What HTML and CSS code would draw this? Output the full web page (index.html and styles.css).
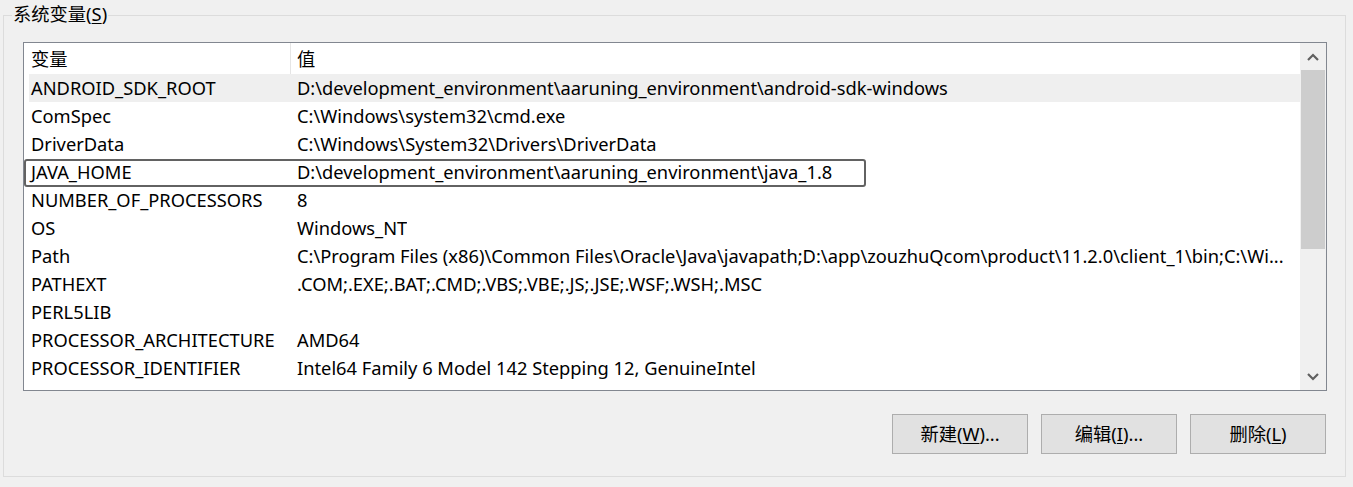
FILE: index.html
```html
<!DOCTYPE html>
<html>
<head>
<meta charset="utf-8">
<link rel="stylesheet" href="styles.css">
</head>
<body>
<div class="group">
  <div class="title">系统变量(<u>S</u>)</div>
  <div class="list">
    <div class="content">
      <div class="header">
        <div class="c1">变量</div>
        <div class="c2">值</div>
      </div>
      <div class="row sel"><div class="c1">ANDROID_SDK_ROOT</div><div class="c2">D:\development_environment\aaruning_environment\android-sdk-windows</div></div>
      <div class="row"><div class="c1">ComSpec</div><div class="c2">C:\Windows\system32\cmd.exe</div></div>
      <div class="row"><div class="c1">DriverData</div><div class="c2">C:\Windows\System32\Drivers\DriverData</div></div>
      <div class="row focus"><div class="c1">JAVA_HOME</div><div class="c2">D:\development_environment\aaruning_environment\java_1.8</div></div>
      <div class="row"><div class="c1">NUMBER_OF_PROCESSORS</div><div class="c2">8</div></div>
      <div class="row"><div class="c1">OS</div><div class="c2">Windows_NT</div></div>
      <div class="row"><div class="c1">Path</div><div class="c2">C:\Program Files (x86)\Common Files\Oracle\Java\javapath;D:\app\zouzhuQcom\product\11.2.0\client_1\bin;C:\Wi...</div></div>
      <div class="row"><div class="c1">PATHEXT</div><div class="c2">.COM;.EXE;.BAT;.CMD;.VBS;.VBE;.JS;.JSE;.WSF;.WSH;.MSC</div></div>
      <div class="row"><div class="c1">PERL5LIB</div><div class="c2"></div></div>
      <div class="row"><div class="c1">PROCESSOR_ARCHITECTURE</div><div class="c2">AMD64</div></div>
      <div class="row"><div class="c1">PROCESSOR_IDENTIFIER</div><div class="c2">Intel64 Family 6 Model 142 Stepping 12, GenuineIntel</div></div>
    </div>
    <div class="scrollbar">
      <div class="arrow">
        <svg width="12" height="8" viewBox="0 0 12 8"><path d="M1 7 L6 2 L11 7" fill="none" stroke="#606060" stroke-width="2.2"/></svg>
      </div>
      <div class="thumb"></div>
      <div class="track"></div>
      <div class="arrow down">
        <svg width="12" height="8" viewBox="0 0 12 8"><path d="M1 1 L6 6 L11 1" fill="none" stroke="#606060" stroke-width="2.2"/></svg>
      </div>
    </div>
  </div>
  <div class="buttons">
    <div class="btn">新建(<u>W</u>)...</div>
    <div class="btn">编辑(<u>I</u>)...</div>
    <div class="btn">删除(<u>L</u>)</div>
  </div>
</div>
</body>
</html>
```

FILE: styles.css
```css
html, body {
  margin: 0;
  padding: 0;
  background: #f0f0f0;
}
body {
  font-family: "Noto Sans", "Noto Sans CJK SC", sans-serif;
  font-size: 18.3px;
  color: #000;
  padding: 15px 0 0 3px;
  height: 487px;
  box-sizing: border-box;
  overflow: hidden;
}
.group {
  width: 1343px;
  height: 462px;
  box-sizing: border-box;
  border: 1px solid #dcdcdc;
  display: flex;
  flex-direction: column;
}
.title {
  align-self: flex-start;
  margin: -12px 0 0 8px;
  padding: 0 1px;
  background: #f0f0f0;
  line-height: 20px;
  height: 20px;
}
.list {
  margin: 18px 0 0 19px;
  width: 1304px;
  height: 349px;
  box-sizing: border-box;
  border: 1px solid #828790;
  background: #fff;
  display: flex;
}
.content {
  flex: 1;
  display: flex;
  flex-direction: column;
  overflow: hidden;
  min-width: 0;
}
.header {
  display: flex;
  height: 31px;
  box-sizing: border-box;
  padding-bottom: 2px;
  align-items: center;
  padding-left: 5px;
  flex: none;
}
.header .c2 {
  border-left: 1px solid #e5e5e5;
  align-self: stretch;
  display: flex;
  align-items: center;
  margin-bottom: -2px;
  padding-bottom: 2px;
}
.row {
  position: relative;
  display: flex;
  height: 28px;
  box-sizing: border-box;
  padding-bottom: 2px;
  flex: none;
  align-items: center;
  margin-left: 5px;
  white-space: nowrap;
}
.c1 {
  width: 261px;
  padding-left: 2px;
  box-sizing: border-box;
  flex: none;
}
.c2 {
  padding-left: 6px;
  white-space: nowrap;
  overflow: hidden;
}
.row .c2 {
  padding-left: 7px;
}
.sel {
  background: #efefef;
}
.focus::after {
  content: "";
  position: absolute;
  left: -5px;
  top: 1px;
  width: 842px;
  height: 28px;
  box-sizing: border-box;
  border: 2px solid #626262;
  border-radius: 3px;
}
.scrollbar {
  width: 26px;
  flex: none;
  background: #f0f0f0;
  display: flex;
  flex-direction: column;
  padding: 0 1px 0 0;
  box-sizing: border-box;
}
.arrow {
  height: 27px;
  display: flex;
  align-items: center;
  justify-content: center;
  flex: none;
}
.thumb {
  height: 179px;
  background: #cdcdcd;
  margin: 0 0 0 1px;
  flex: none;
}
.track {
  flex: 1;
}
.buttons {
  display: flex;
  justify-content: flex-end;
  gap: 13px;
  margin: 23px 19px 0 0;
}
.btn {
  width: 136px;
  height: 40px;
  box-sizing: border-box;
  border: 1px solid #adadad;
  background: #e1e1e1;
  display: flex;
  align-items: center;
  justify-content: center;
  padding-bottom: 2px;
}
u {
  text-decoration-thickness: 1px;
  text-underline-offset: 2px;
}
```
